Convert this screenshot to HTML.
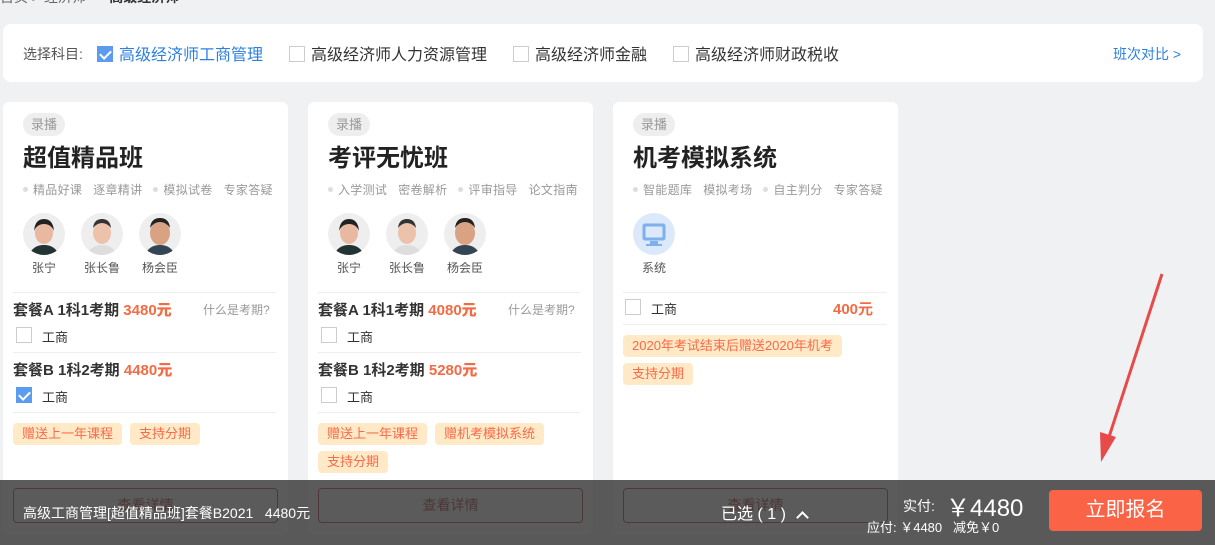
<!DOCTYPE html>
<html><head><meta charset="utf-8"><style>
*{margin:0;padding:0;box-sizing:border-box}
body{width:1215px;height:545px;overflow:hidden;background:#f0f1f3;font-family:"Liberation Sans","Noto Sans CJK SC",sans-serif;position:relative;color:#333}
.abs{position:absolute}
.panel{left:3px;top:24px;width:1200px;height:58px;background:#fff;border-radius:8px}
.cb{position:absolute;width:16px;height:16px;border:1px solid #ccc;background:#fff}
.cb.on{background:#5b9cf0;border-color:#5b9cf0}
.cb.on:after{content:"";position:absolute;left:4px;top:1px;width:5px;height:9px;border:solid #fff;border-width:0 2px 2px 0;transform:rotate(45deg)}
.card{top:102px;width:285px;height:433px;background:#fff;border-radius:6px}
.tag{left:20px;top:11px;width:42px;height:23px;border-radius:12px;background:#eee;color:#999;font-size:13px;line-height:23px;text-align:center}
.title{left:20px;top:40px;font-size:24px;font-weight:bold;color:#222;line-height:34px}
.feat{left:20px;top:80px;font-size:12px;color:#999;white-space:nowrap;line-height:16px;letter-spacing:.3px}
.feat i{display:inline-block;width:5px;height:5px;border-radius:50%;background:#ddd;margin:0 5px 2px 0;vertical-align:middle}
.feat span{margin-right:11px}
.av{top:111px;width:42px;height:42px;border-radius:50%;background:#eee;overflow:hidden}
.nm{top:157px;font-size:12px;color:#555;width:42px;text-align:center}
.hr{left:10px;width:263px;height:1px;background:#eee}
.row{left:10px;font-size:15px;font-weight:bold;color:#333}
.row b{color:#f36b43}
.lab{font-size:13px;color:#333}
.pill{height:22px;line-height:22px;padding:0 9px;background:#ffe9c6;color:#fa6a48;font-size:13px;border-radius:4px;white-space:nowrap}
.btn{left:10px;top:386px;width:265px;height:35px;border:1px solid #b0403a;border-radius:4px;color:#a33;font-size:14px;text-align:center;line-height:33px}
.bar{left:0;top:480px;width:1215px;height:65px;background:rgba(55,55,55,.82);color:#fff}
</style></head><body>
<div class="abs" style="left:0;top:-13px;font-size:14px;color:#666">首页 &gt; 经济师 &nbsp;&nbsp;&nbsp;&nbsp;&nbsp;<b style="color:#333">高级经济师</b></div>
<div class="abs panel">
 <div class="abs" style="left:20px;top:20px;font-size:14px;color:#555">选择科目:</div>
 <div class="cb on" style="left:94px;top:22px"></div>
 <div class="abs" style="left:116px;top:17px;font-size:16px;color:#2d7fe0">高级经济师工商管理</div>
 <div class="cb" style="left:286px;top:22px"></div>
 <div class="abs" style="left:308px;top:17px;font-size:16px;color:#333">高级经济师人力资源管理</div>
 <div class="cb" style="left:510px;top:22px"></div>
 <div class="abs" style="left:532px;top:17px;font-size:16px;color:#333">高级经济师金融</div>
 <div class="cb" style="left:670px;top:22px"></div>
 <div class="abs" style="left:692px;top:17px;font-size:16px;color:#333">高级经济师财政税收</div>
 <div class="abs" style="left:1110px;top:20px;font-size:14px;color:#2d7fe0">班次对比 &gt;</div>
</div>

<!-- card 1 -->
<div class="abs card" style="left:3px">
 <div class="abs tag">录播</div>
 <div class="abs title">超值精品班</div>
 <div class="abs feat"><i></i><span>精品好课</span><span>逐章精讲</span><i></i><span>模拟试卷</span><span>专家答疑</span></div>
 <div class="abs av" style="left:20px"><svg width="42" height="42"><ellipse cx="21" cy="20" rx="9" ry="11" fill="#e8b9a0"/><path d="M11 18 Q12 6 21 6 Q30 6 31 18 Q28 11 21 11 Q14 11 11 18Z" fill="#222"/><path d="M6 42 Q10 32 21 32 Q32 32 36 42Z" fill="#233"/></svg></div>
 <div class="abs av" style="left:78px"><svg width="42" height="42"><ellipse cx="21" cy="20" rx="9" ry="11" fill="#ecc2ab"/><path d="M12 15 Q13 6 21 6 Q29 6 30 15 Q26 10 21 10 Q16 10 12 15Z" fill="#333"/><path d="M6 42 Q10 32 21 32 Q32 32 36 42Z" fill="#ddd"/></svg></div>
 <div class="abs av" style="left:136px"><svg width="42" height="42"><ellipse cx="21" cy="20" rx="10" ry="12" fill="#d9a282"/><path d="M11 15 Q12 5 21 5 Q30 5 31 15 Q27 9 21 9 Q15 9 11 15Z" fill="#222"/><path d="M6 42 Q10 32 21 32 Q32 32 36 42Z" fill="#345"/></svg></div>
 <div class="abs nm" style="left:20px">张宁</div><div class="abs nm" style="left:78px">张长鲁</div><div class="abs nm" style="left:136px">杨会臣</div>
 <div class="abs hr" style="top:190px"></div>
 <div class="abs row" style="top:197px">套餐A 1科1考期 <b>3480元</b></div>
 <div class="abs" style="left:200px;top:199px;font-size:12px;color:#999">什么是考期?</div>
 <div class="cb" style="left:13px;top:225px"></div><div class="abs lab" style="left:39px;top:225px">工商</div>
 <div class="abs hr" style="top:250px"></div>
 <div class="abs row" style="top:257px">套餐B 1科2考期 <b>4480元</b></div>
 <div class="cb on" style="left:13px;top:285px"></div><div class="abs lab" style="left:39px;top:285px">工商</div>
 <div class="abs hr" style="top:310px"></div>
 <div class="abs pill" style="left:10px;top:321px">赠送上一年课程</div>
 <div class="abs pill" style="left:127px;top:321px">支持分期</div>
 <div class="abs btn">查看详情</div>
</div>

<!-- card 2 -->
<div class="abs card" style="left:308px">
 <div class="abs tag">录播</div>
 <div class="abs title">考评无忧班</div>
 <div class="abs feat"><i></i><span>入学测试</span><span>密卷解析</span><i></i><span>评审指导</span><span>论文指南</span></div>
 <div class="abs av" style="left:20px"><svg width="42" height="42"><ellipse cx="21" cy="20" rx="9" ry="11" fill="#e8b9a0"/><path d="M11 18 Q12 6 21 6 Q30 6 31 18 Q28 11 21 11 Q14 11 11 18Z" fill="#222"/><path d="M6 42 Q10 32 21 32 Q32 32 36 42Z" fill="#233"/></svg></div>
 <div class="abs av" style="left:78px"><svg width="42" height="42"><ellipse cx="21" cy="20" rx="9" ry="11" fill="#ecc2ab"/><path d="M12 15 Q13 6 21 6 Q29 6 30 15 Q26 10 21 10 Q16 10 12 15Z" fill="#333"/><path d="M6 42 Q10 32 21 32 Q32 32 36 42Z" fill="#ddd"/></svg></div>
 <div class="abs av" style="left:136px"><svg width="42" height="42"><ellipse cx="21" cy="20" rx="10" ry="12" fill="#d9a282"/><path d="M11 15 Q12 5 21 5 Q30 5 31 15 Q27 9 21 9 Q15 9 11 15Z" fill="#222"/><path d="M6 42 Q10 32 21 32 Q32 32 36 42Z" fill="#345"/></svg></div>
 <div class="abs nm" style="left:20px">张宁</div><div class="abs nm" style="left:78px">张长鲁</div><div class="abs nm" style="left:136px">杨会臣</div>
 <div class="abs hr" style="top:190px"></div>
 <div class="abs row" style="top:197px">套餐A 1科1考期 <b>4080元</b></div>
 <div class="abs" style="left:200px;top:199px;font-size:12px;color:#999">什么是考期?</div>
 <div class="cb" style="left:13px;top:225px"></div><div class="abs lab" style="left:39px;top:225px">工商</div>
 <div class="abs hr" style="top:250px"></div>
 <div class="abs row" style="top:257px">套餐B 1科2考期 <b>5280元</b></div>
 <div class="cb" style="left:13px;top:285px"></div><div class="abs lab" style="left:39px;top:285px">工商</div>
 <div class="abs hr" style="top:310px"></div>
 <div class="abs pill" style="left:10px;top:321px">赠送上一年课程</div>
 <div class="abs pill" style="left:127px;top:321px">赠机考模拟系统</div>
 <div class="abs pill" style="left:10px;top:349px">支持分期</div>
 <div class="abs btn">查看详情</div>
</div>

<!-- card 3 -->
<div class="abs card" style="left:613px">
 <div class="abs tag">录播</div>
 <div class="abs title">机考模拟系统</div>
 <div class="abs feat"><i></i><span>智能题库</span><span>模拟考场</span><i></i><span>自主判分</span><span>专家答疑</span></div>
 <div class="abs av" style="left:20px;background:#dbe9fb"><svg width="42" height="42"><rect x="11" y="12" width="20" height="14" rx="1" fill="none" stroke="#7fb0ee" stroke-width="3"/><rect x="17" y="28" width="8" height="3" fill="#7fb0ee"/><rect x="13" y="31" width="16" height="2" fill="#7fb0ee"/></svg></div>
 <div class="abs nm" style="left:20px">系统</div>
 <div class="abs hr" style="top:190px"></div>
 <div class="cb" style="left:12px;top:197px"></div><div class="abs lab" style="left:38px;top:197px">工商</div>
 <div class="abs" style="left:220px;top:196px;font-size:15px;font-weight:bold;color:#f36b43">400元</div>
 <div class="abs hr" style="top:222px"></div>
 <div class="abs pill" style="left:10px;top:233px">2020年考试结束后赠送2020年机考</div>
 <div class="abs pill" style="left:10px;top:261px">支持分期</div>
 <div class="abs btn">查看详情</div>
</div>

<svg class="abs" style="left:0;top:0" width="1215" height="545"><line x1="1162" y1="274" x2="1108" y2="440" stroke="#e84a4a" stroke-width="3"/><polygon points="1101,462 1100,432 1116,437" fill="#e84a4a"/></svg>

<div class="abs bar">
 <div class="abs" style="left:23px;top:23px;font-size:14px">高级工商管理[超值精品班]套餐B2021&nbsp;&nbsp;&nbsp;4480元</div>
 <div class="abs" style="left:721px;top:20px;font-size:16px">已选 ( 1 ) <span style="display:inline-block;width:9px;height:9px;border:solid #fff;border-width:2px 0 0 2px;transform:rotate(45deg);margin:0 0 -3px 8px"></span></div>
 <div class="abs" style="left:903px;top:16px;font-size:14px">实付: </div>
 <div class="abs" style="left:946px;top:8px;font-size:24px">￥4480</div>
 <div class="abs" style="left:867px;top:37px;font-size:13px">应付: ￥4480&nbsp;&nbsp;&nbsp;减免￥0</div>
 <div class="abs" style="left:1049px;top:10px;width:153px;height:41px;background:#fa6346;border-radius:4px;font-size:20px;text-align:center;line-height:41px">立即报名</div>
</div>
</body></html>
